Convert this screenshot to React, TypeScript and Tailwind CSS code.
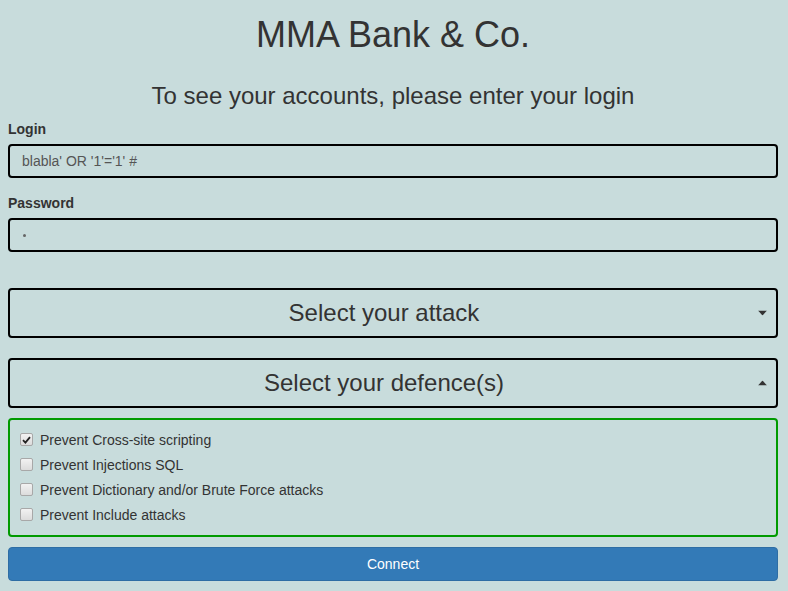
import { useState } from "react";

const defences = [
  "Prevent Cross-site scripting",
  "Prevent Injections SQL",
  "Prevent Dictionary and/or Brute Force attacks",
  "Prevent Include attacks",
];

function Caret({ up }: { up?: boolean }) {
  return (
    <svg width="9" height="5" viewBox="0 0 9 5" className="absolute right-[9px] top-1/2 -translate-y-1/2">
      <path d={up ? "M0 5 L4.5 0 L9 5 Z" : "M0 0 L9 0 L4.5 5 Z"} fill="#333" />
    </svg>
  );
}

function Check({ on }: { on: boolean }) {
  return (
    <span className="flex h-[13px] w-[13px] items-center justify-center rounded-[2px] border border-[#a8a8a8] bg-gradient-to-b from-[#f2f2f2] to-[#dcdcdc]">
      {on && (
        <svg width="9" height="8" viewBox="0 0 9 8">
          <path d="M1 4.2 L3.4 6.6 L8 1.2" fill="none" stroke="#222" strokeWidth="1.8" />
        </svg>
      )}
    </span>
  );
}

export default function App() {
  const [checked, setChecked] = useState([true, false, false, false]);

  return (
    <div className="min-h-[591px] bg-[#c8dcdc] pl-[8px] pr-[10px] pb-[10px] text-[14px] text-[#333] [font-family:'Liberation_Sans',Arial,sans-serif]">
      <h1 className="pt-[15px] text-center text-[36px] leading-[40px]">MMA Bank &amp; Co.</h1>
      <h3 className="mt-[28px] text-center text-[24px] leading-[26.4px]">
        To see your accounts, please enter your login
      </h3>

      {/* Login */}
      <div className="mt-[10px]">
        <label className="block text-[14px] font-bold leading-[20px]">Login</label>
        <div className="mt-[5px] flex h-[34px] items-center rounded-[4px] border-2 border-black px-[12px] text-[#555]">
          blabla' OR '1'='1' #
        </div>
      </div>

      <div className="mt-[15px]">
        <label className="block text-[14px] font-bold leading-[20px]">Password</label>
        <div className="mt-[5px] flex h-[34px] items-center rounded-[4px] border-2 border-black px-[13px] text-[#555]">
          <span className="h-[3px] w-[3px] rounded-full bg-[#666]" />
        </div>
      </div>

      {/* Selects */}
      <div className="relative mt-[36px] flex h-[50px] items-center justify-center rounded-[4px] border-2 border-black pr-[18px] text-[24px]">
        Select your attack
        <Caret />
      </div>

      <div className="relative mt-[20px] flex h-[50px] items-center justify-center rounded-[4px] border-2 border-black pr-[18px] text-[24px]">
        Select your defence(s)
        <Caret up />
      </div>

      <div className="mt-[10px] rounded-[4px] border-2 border-[#009a00] pl-[10px] pt-[7px] pb-[8px]">
        {defences.map((d, i) => (
          <label
            key={d}
            className="flex h-[25px] cursor-pointer items-center gap-[7px] leading-[20px]"
            onClick={() => setChecked(checked.map((c, j) => (j === i ? !c : c)))}
          >
            <Check on={checked[i]} />
            <span>{d}</span>
          </label>
        ))}
      </div>

      <button className="mt-[10px] flex h-[34px] w-full items-center justify-center rounded-[4px] border border-[#2e6da4] bg-[#337ab7] text-white">
        Connect
      </button>
    </div>
  );
}
